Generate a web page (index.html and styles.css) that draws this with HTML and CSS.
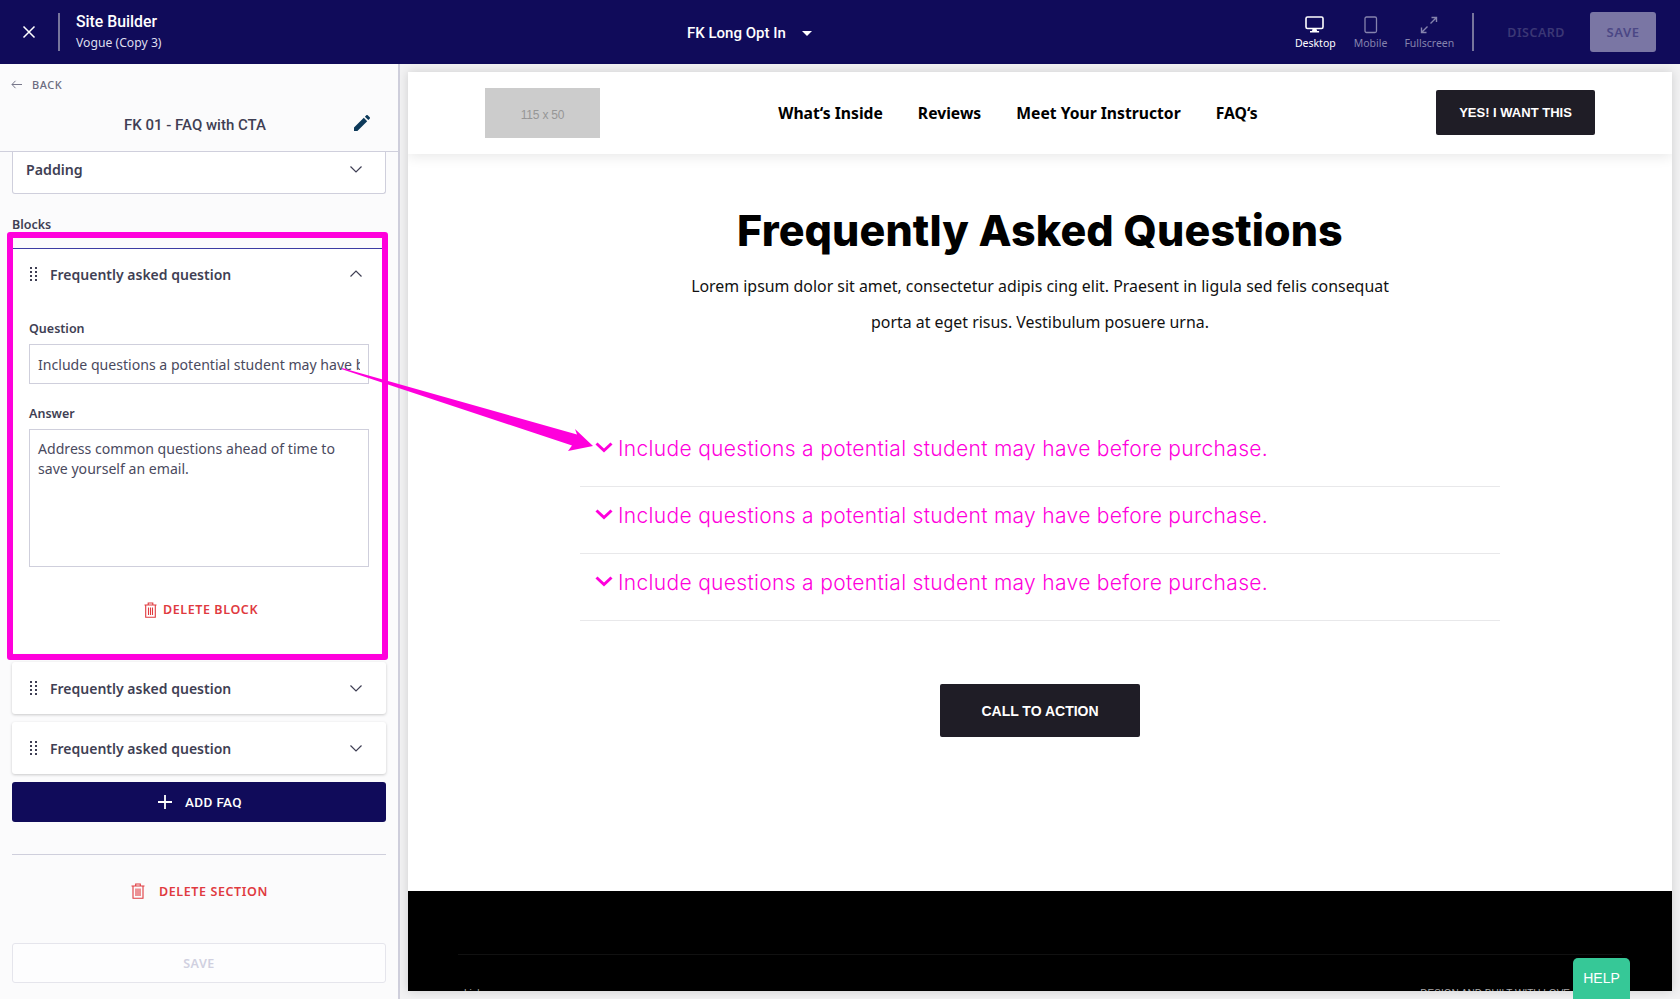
FILE: index.html
```html
<!DOCTYPE html>
<html lang="en">
<head>
  <meta charset="UTF-8" />
  <title>Site Builder</title>
  <link rel="stylesheet" href="styles.css">
</head>
<body>

<header class="topbar">
  <div class="top-left">
    <svg class="close-icon" width="14" height="14" viewBox="0 0 14 14"><path d="M1.5 1.5l11 11M12.5 1.5l-11 11" stroke="#fff" stroke-width="1.5" fill="none"/></svg>
    <div class="top-sep"></div>
    <div>
      <div class="app-name">Site Builder</div>
      <div class="app-sub">Vogue (Copy 3)</div>
    </div>
  </div>
  <div class="page-picker">
    <span>FK Long Opt In</span>
    <svg width="10" height="5" viewBox="0 0 10 5"><path d="M0 0h10L5 5z" fill="#fff"/></svg>
  </div>
  <div class="top-right">
    <div class="view-btn active">
      <svg width="20" height="18" viewBox="0 0 20 18"><rect x="1" y="1" width="17" height="11.5" rx="1.5" fill="none" stroke="#fff" stroke-width="1.6"/><path d="M7.5 13h4l.6 2h2v1.5H5V15h2z" fill="#fff"/></svg>
      <span>Desktop</span>
    </div>
    <div class="view-btn mobile">
      <svg width="14" height="18" viewBox="0 0 14 18"><rect x="1" y="1" width="11.5" height="15.5" rx="1.5" fill="none" stroke="#8583ad" stroke-width="1.3"/></svg>
      <span>Mobile</span>
    </div>
    <div class="view-btn full">
      <svg width="18" height="18" viewBox="0 0 18 18"><path d="M10.5 7.5L16 2M11.5 1.5H16.500V6M7.500 10.500L2 16M1.500 11.500V16.500H6.500" fill="none" stroke="#8583ad" stroke-width="1.4"/></svg>
      <span>Fullscreen</span>
    </div>
    <div class="top-sep right"></div>
    <span class="discard">DISCARD</span>
    <div class="top-save">SAVE</div>
  </div>
</header>

<div class="workspace">
  <aside class="sidebar">
    <div class="back-row">
      <svg width="11" height="9" viewBox="0 0 11 9"><path d="M4.500 .8L1 4.500l3.500 3.700M1 4.500h10" fill="none" stroke="#77778a" stroke-width="1"/></svg>
      <span>BACK</span>
    </div>
    <div class="section-title">
      <span>FK 01 - FAQ with CTA</span>
      <svg class="pencil" width="16" height="16" viewBox="0 0 16 16"><path d="M0 16v-3.400L9.800 2.800l3.400 3.400L3.400 16zM10.900 1.700L12.300.3c.4-.4 1-.4 1.400 0l2 2c.4.400.4 1 0 1.400l-1.400 1.400z" fill="#0d3a5a"/></svg>
    </div>

    <div class="panel">
      <div class="padding-card">
        <span>Padding</span>
        <svg class="chev" width="12" height="7" viewBox="0 0 12 7"><path d="M.5.500L6 6 11.500.500" fill="none" stroke="#3f3f54" stroke-width="1.200"/></svg>
      </div>

      <div class="blocks-label">Blocks</div>

      <div class="faq-open">
        <div class="card-head">
          <svg class="grip" width="8" height="14" viewBox="0 0 8 14"><path d="M0 0h2v2H0zM5 0h2v2H5zM0 4h2v2H0zM5 4h2v2H5zM0 8h2v2H0zM5 8h2v2H5zM0 12h2v2H0zM5 12h2v2H5z" fill="#3f3f54"/></svg>
          <span>Frequently asked question</span>
          <svg class="chev" width="12" height="7" viewBox="0 0 12 7"><path d="M.5 6.500L6 1l5.500 5.500" fill="none" stroke="#3f3f54" stroke-width="1.200"/></svg>
        </div>
        <label class="field-label">Question</label>
        <div class="text-input"><span class="input-clip">Include questions a potential student may have before purchase.</span></div>
        <label class="field-label answer">Answer</label>
        <div class="text-area">Address common questions ahead of time to save yourself an email.</div>
        <div class="delete-block">
          <svg width="13" height="16" viewBox="0 0 13 16"><path d="M.5 3h12M4.200 3V1h4.600v2M1.700 3v12.200h9.600V3M4.500 5.500v7.500M6.500 5.500v7.500M8.500 5.500v7.500" fill="none" stroke="#e03a3f" stroke-width="1.100"/></svg>
          <span>DELETE BLOCK</span>
        </div>
      </div>

      <div class="faq-card">
        <svg class="grip" width="8" height="14" viewBox="0 0 8 14"><path d="M0 0h2v2H0zM5 0h2v2H5zM0 4h2v2H0zM5 4h2v2H5zM0 8h2v2H0zM5 8h2v2H5zM0 12h2v2H0zM5 12h2v2H5z" fill="#3f3f54"/></svg>
        <span>Frequently asked question</span>
        <svg class="chev" width="12" height="7" viewBox="0 0 12 7"><path d="M.5.500L6 6 11.500.500" fill="none" stroke="#3f3f54" stroke-width="1.200"/></svg>
      </div>
      <div class="faq-card">
        <svg class="grip" width="8" height="14" viewBox="0 0 8 14"><path d="M0 0h2v2H0zM5 0h2v2H5zM0 4h2v2H0zM5 4h2v2H5zM0 8h2v2H0zM5 8h2v2H5zM0 12h2v2H0zM5 12h2v2H5z" fill="#3f3f54"/></svg>
        <span>Frequently asked question</span>
        <svg class="chev" width="12" height="7" viewBox="0 0 12 7"><path d="M.5.500L6 6 11.500.500" fill="none" stroke="#3f3f54" stroke-width="1.200"/></svg>
      </div>

      <div class="add-faq">
        <svg width="14" height="14" viewBox="0 0 14 14"><path d="M7 0v14M0 7h14" stroke="#fff" stroke-width="1.800"/></svg>
        <span>ADD FAQ</span>
      </div>

      <div class="divider"></div>

      <div class="delete-section">
        <svg width="14" height="16" viewBox="0 0 14 16"><path d="M.5 3h13M4.700 3V1h4.600v2M2 3v12.200h10V3M5 5.500v7.500M7 5.500v7.500M9 5.500v7.500" fill="none" stroke="#e03a3f" stroke-width="1.100"/></svg>
        <span>DELETE SECTION</span>
      </div>

      <div class="side-save">SAVE</div>
    </div>
  </aside>

  <main class="preview">
    <div class="page">
      <nav class="page-nav">
        <div class="logo-box">115 x 50</div>
        <div class="nav-links">
          <span>What‘s Inside</span>
          <span>Reviews</span>
          <span>Meet Your Instructor</span>
          <span>FAQ‘s</span>
        </div>
        <div class="nav-cta">YES! I WANT THIS</div>
      </nav>

      <section class="faq-section">
        <h1>Frequently Asked Questions</h1>
        <p>Lorem ipsum dolor sit amet, consectetur adipis cing elit. Praesent in ligula sed felis consequat<br>porta at eget risus. Vestibulum posuere urna.</p>
        <div class="faq-list">
          <div class="faq-row">
            <svg width="18" height="11" viewBox="0 0 18 11"><path d="M1.500 1.500L9 8.500l7.500-7" fill="none" stroke="#ff00dc" stroke-width="3"/></svg>
            <span>Include questions a potential student may have before purchase.</span>
          </div>
          <div class="faq-row">
            <svg width="18" height="11" viewBox="0 0 18 11"><path d="M1.500 1.500L9 8.500l7.500-7" fill="none" stroke="#ff00dc" stroke-width="3"/></svg>
            <span>Include questions a potential student may have before purchase.</span>
          </div>
          <div class="faq-row">
            <svg width="18" height="11" viewBox="0 0 18 11"><path d="M1.500 1.500L9 8.500l7.500-7" fill="none" stroke="#ff00dc" stroke-width="3"/></svg>
            <span>Include questions a potential student may have before purchase.</span>
          </div>
        </div>
        <div class="cta">CALL TO ACTION</div>
      </section>

      <footer class="page-footer">
        <div class="footer-line"></div>
        <div class="footer-text">
          <span>Links</span>
          <span>DESIGN AND BUILT WITH LOVE</span>
        </div>
      </footer>
    </div>
  </main>
</div>

<div class="highlight-box"></div>
<svg class="arrow" width="1680" height="999" viewBox="0 0 1680 999"><path d="M342 368L577 434.500 575 429 593 446 568 451 572 445.500 342 369.200z" fill="#ff00dc"/></svg>
<div class="help-btn">HELP</div>

</body>
</html>
```

FILE: styles.css
```css
* {
  box-sizing: border-box;
}
html, body {
  margin: 0;
  height: 999px;
  overflow: hidden;
}
body {
  font-family: "Noto Sans", sans-serif;
  background: #f2f2f3;
  position: relative;
}

/* top bar */
.topbar {
  height: 64px;
  background: #100b5a;
  color: #fff;
  display: flex;
  align-items: center;
}
.top-left {
  width: 687px;
  display: flex;
  align-items: center;
  padding-left: 22px;
}
.close-icon {
  display: block;
}
.top-sep {
  width: 2px;
  height: 38px;
  background: #77759c;
  margin: 0 16px 0 22px;
}
.app-name {
  font-family: Roboto, sans-serif;
  font-weight: 500;
  font-size: 15.800px;
  line-height: 20px;
}
.app-sub {
  font-size: 12.200px;
  line-height: 18px;
  margin-top: 2px;
  color: #dedeee;
}
.page-picker {
  display: flex;
  align-items: center;
  gap: 16px;
  padding-top: 2px;
  font-family: Roboto, sans-serif;
  font-weight: 500;
  font-size: 15px;
}
.top-right {
  margin-left: auto;
  display: flex;
  align-items: center;
  padding-right: 24px;
}
.view-btn {
  display: flex;
  flex-direction: column;
  align-items: center;
  padding-top: 2px;
  font-size: 10.500px;
  line-height: 14px;
  color: #8583ad;
}
.view-btn svg {
  display: block;
  margin-bottom: 2px;
}
.view-btn.active {
  color: #fff;
}
.view-btn.mobile {
  margin-left: 18px;
}
.view-btn.full {
  margin-left: 17px;
}
.top-sep.right {
  margin: 0 33px 0 18px;
}
.discard {
  font-size: 12.500px;
  font-weight: 600;
  letter-spacing: .5px;
  color: #3b3775;
}
.top-save {
  width: 66px;
  height: 40px;
  margin-left: 25px;
  background: #7a76a4;
  border-radius: 3px;
  color: #4b4785;
  font-size: 13px;
  font-weight: 600;
  letter-spacing: .5px;
  display: flex;
  align-items: center;
  justify-content: center;
}

.workspace {
  display: flex;
  height: 935px;
}

/* sidebar */
.sidebar {
  width: 400px;
  flex: none;
  background: #fbfbfc;
  border-right: 2px solid #cfcfdc;
  color: #3f3f54;
  overflow: hidden;
}
.back-row {
  height: 40px;
  padding-left: 11px;
  display: flex;
  align-items: center;
  gap: 10px;
  font-size: 11px;
  font-weight: 500;
  letter-spacing: .5px;
  color: #6c6c80;
}
.section-title {
  height: 48px;
  border-bottom: 1px solid #cfcfdc;
  position: relative;
  display: flex;
  align-items: center;
  justify-content: center;
  padding: 0 8px 6px 0;
  font-family: Roboto, sans-serif;
  font-weight: 500;
  font-size: 15px;
}
.pencil {
  position: absolute;
  left: 354px;
  top: 11px;
}
.panel {
  padding: 0 12px;
}
.padding-card {
  height: 42px;
  background: #fff;
  border: 1px solid #cfcfdc;
  border-top: 0;
  border-radius: 0 0 3px 3px;
  padding: 0 23px 6px 13px;
  display: flex;
  align-items: center;
  justify-content: space-between;
  font-size: 14.200px;
  font-weight: 600;
}
.blocks-label {
  font-size: 12.500px;
  font-weight: 600;
  line-height: 18px;
  margin-top: 22px;
  height: 32px;
}
.faq-open {
  height: 405px;
  background: #fff;
  border-top: 1px solid #3d3da3;
  padding: 0 17px;
}
.card-head, .faq-card {
  display: flex;
  align-items: center;
  font-size: 14px;
  font-weight: 600;
}
.card-head {
  height: 50px;
  margin: 0 0 0 1px;
}
.grip {
  margin-right: 12px;
  flex: none;
}
.chev {
  margin-left: auto;
  flex: none;
}
.card-head .chev {
  margin-right: 7px;
  margin-bottom: 2px;
}
.field-label {
  display: block;
  font-size: 12.500px;
  font-weight: 600;
  line-height: 18px;
  margin-top: 21px;
  margin-bottom: 6px;
}
.field-label.answer {
  margin-top: 21px;
  margin-bottom: 6px;
}
.text-input {
  height: 40px;
  width: 340px;
  border: 1px solid #cfcfdc;
  padding: 0 8px;
  font-size: 14.100px;
  line-height: 40px;
  color: #4a4a5e;
}
.input-clip {
  display: block;
  height: 38px;
  white-space: nowrap;
  overflow: hidden;
}
.text-area {
  height: 138px;
  width: 340px;
  border: 1px solid #cfcfdc;
  padding: 9px 8px;
  font-size: 14.100px;
  line-height: 20px;
  color: #4a4a5e;
}
.delete-block {
  display: flex;
  align-items: center;
  justify-content: center;
  gap: 6px;
  margin-top: 34px;
  padding-left: 4px;
  font-size: 12.500px;
  font-weight: 600;
  letter-spacing: .6px;
  color: #e03a3f;
}
.faq-card {
  height: 52px;
  margin-top: 9px;
  background: #fff;
  border-radius: 3px;
  box-shadow: 0 1px 3px rgba(0, 0, 0, .2);
  padding: 0 24px 0 18px;
}
.faq-card + .faq-card {
  margin-top: 8px;
}
.add-faq {
  height: 40px;
  margin-top: 8px;
  background: #100b5a;
  border-radius: 3px;
  color: #fff;
  display: flex;
  align-items: center;
  justify-content: center;
  gap: 13px;
  padding-left: 2px;
  font-family: Roboto, sans-serif;
  font-weight: 500;
  font-size: 13.500px;
  letter-spacing: .4px;
}
.divider {
  height: 1px;
  background: #cfcfdc;
  margin-top: 32px;
}
.delete-section {
  display: flex;
  align-items: center;
  justify-content: center;
  gap: 14px;
  height: 18px;
  margin-top: 27px;
  padding-left: 1px;
  font-size: 12.500px;
  font-weight: 600;
  letter-spacing: .6px;
  color: #e03a3f;
}
.side-save {
  height: 40px;
  margin-top: 43px;
  border: 1px solid #e5e5ec;
  border-radius: 3px;
  background: #fdfdfe;
  display: flex;
  align-items: center;
  justify-content: center;
  font-size: 12.500px;
  font-weight: 600;
  letter-spacing: .5px;
  color: #d0d0e0;
}

/* preview */
.preview {
  flex: 1;
  padding: 8px 8px 8px 8px;
  min-width: 0;
}
.page {
  height: 919px;
  background: #fff;
  box-shadow: 0 0 10px rgba(0, 0, 0, .15);
  display: flex;
  flex-direction: column;
  overflow: hidden;
}
.page-nav {
  height: 82px;
  flex: none;
  padding: 0 77px;
  display: flex;
  align-items: center;
  justify-content: space-between;
  box-shadow: 0 3px 12px rgba(0, 0, 0, .09);
}
.logo-box {
  width: 115px;
  height: 50px;
  background: #ccc;
  color: #969696;
  font-family: "Liberation Sans", sans-serif;
  font-size: 12px;
  letter-spacing: -.2px;
  padding-top: 3px;
  display: flex;
  align-items: center;
  justify-content: center;
}
.nav-links {
  display: flex;
  gap: 35px;
  font-size: 15.700px;
  font-weight: 700;
  color: #000;
}
.nav-cta {
  width: 159px;
  height: 45px;
  margin-bottom: 2px;
  background: #1f1d26;
  border-radius: 2px;
  color: #fff;
  font-family: "Liberation Sans", sans-serif;
  font-weight: 700;
  font-size: 13px;
  display: flex;
  align-items: center;
  justify-content: center;
}
.faq-section {
  flex: 1;
  text-align: center;
}
h1 {
  margin: 48px 0 0;
  font-family: Inter, sans-serif;
  font-weight: 800;
  font-size: 43px;
  letter-spacing: .1px;
  line-height: 56px;
  color: #000;
}
.faq-section p {
  margin: 10px 0 0;
  font-size: 15.900px;
  line-height: 36px;
  color: #111;
}
.faq-list {
  width: 920px;
  margin: 80px auto 0;
  text-align: left;
}
.faq-row {
  height: 67px;
  border-bottom: 1px solid #e8e8ea;
  padding: 13px 0 0 15px;
  display: flex;
  align-items: flex-start;
  gap: 5px;
  font-family: Inter, sans-serif;
  font-weight: 300;
  font-size: 21px;
  letter-spacing: .32px;
  line-height: 32px;
  color: #ff00dc;
}
.faq-row svg {
  margin-top: 9px;
  flex: none;
}
.cta {
  width: 200px;
  height: 53px;
  margin: 63px auto 0;
  background: #1f1d26;
  border-radius: 2px;
  color: #fff;
  font-family: "Liberation Sans", sans-serif;
  font-weight: 700;
  font-size: 14px;
  display: flex;
  align-items: center;
  justify-content: center;
}
.page-footer {
  height: 100px;
  flex: none;
  background: #000;
  padding: 63px 50px 0;
  overflow: hidden;
}
.footer-line {
  height: 1px;
  background: #111;
}
.footer-text {
  display: flex;
  justify-content: space-between;
  padding: 33px 52px 0 6px;
  font-family: "Liberation Sans", sans-serif;
  font-size: 10px;
  color: #aaa;
}

/* annotation overlays */
.highlight-box {
  position: absolute;
  left: 7px;
  top: 232px;
  width: 381px;
  height: 428px;
  border: 6px solid #ff00dc;
  border-radius: 3px;
}
.arrow {
  position: absolute;
  left: 0;
  top: 0;
  pointer-events: none;
}
.help-btn {
  position: absolute;
  left: 1573px;
  top: 958px;
  width: 57px;
  height: 41px;
  background: #36c897;
  border-radius: 5px 5px 0 0;
  color: #fff;
  font-family: "Liberation Sans", sans-serif;
  font-size: 14px;
  line-height: 40px;
  text-align: center;
}
```
